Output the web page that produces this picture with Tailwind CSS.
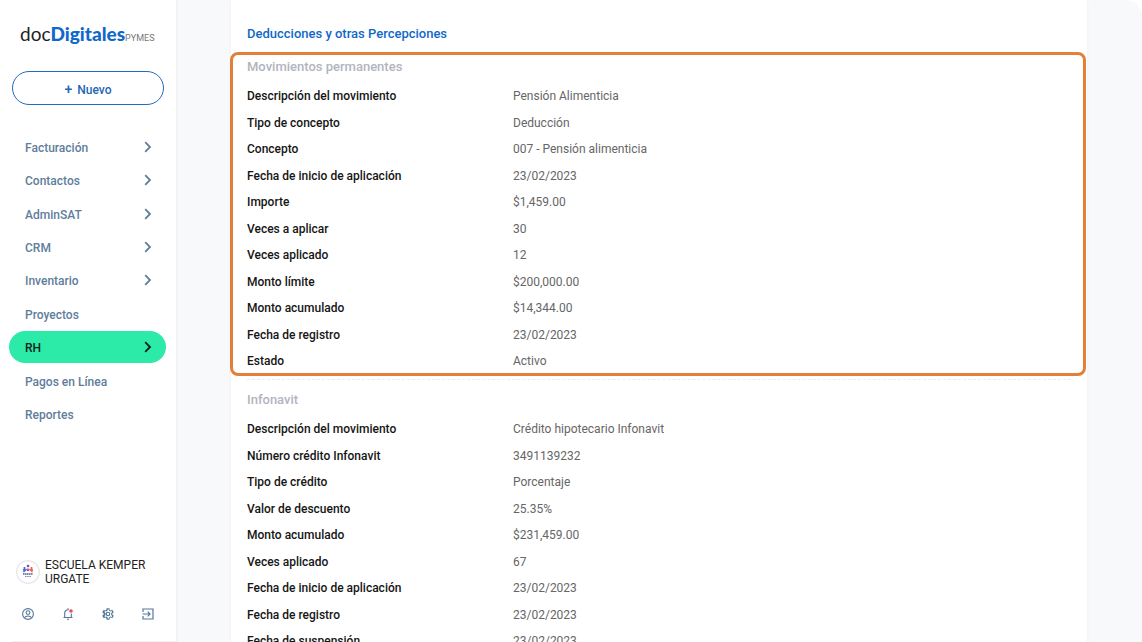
<!DOCTYPE html>
<html lang="es">
  <head>
    <meta charset="UTF-8" />
    <meta name="viewport" content="width=device-width, initial-scale=1.0" />
    <title>docDigitales PYMES</title>
    <script src="https://cdn.jsdelivr.net/npm/@tailwindcss/browser@4"></script>
  </head>
  <body class="flex h-screen overflow-hidden bg-white font-['Roboto',sans-serif] text-xs">
    <svg class="hidden">
      <symbol id="chevron" viewBox="0 0 8 12">
        <path d="M1.200 1.200 6 6l-4.800 4.800" fill="none" stroke="currentColor" stroke-width="1.800" />
      </symbol>
    </svg>

    <!-- Sidebar -->
    <aside class="flex w-44 shrink-0 flex-col bg-white">
      <a href="#" class="ml-5 mt-5 flex h-7 items-baseline whitespace-nowrap font-['Lato',sans-serif] text-[19px] leading-7 text-[#222]">
        <span>doc</span><span class="font-black text-[#1068cc]">Digitales</span><span class="font-['Roboto',sans-serif] text-[9px] text-[#777]">PYMES</span>
      </a>

      <button class="mx-3 mt-[23px] h-[34px] rounded-full border border-[#1f6dbf] pt-0.5 font-medium text-[#1f66b5]">
        <span class="mr-0.5 text-sm leading-4">+</span> Nuevo
      </button>

      <nav class="mt-[26px] flex flex-col gap-px pl-[9px] pr-2.5 font-medium text-[#5f7d9c] *:pt-0.5 [&_svg]:mb-0.5">
        <a href="#" class="flex h-8 items-center justify-between rounded-full pl-4 pr-3.5">Facturación <svg class="h-3 w-2"><use href="#chevron" /></svg></a>
        <a href="#" class="flex h-8 items-center justify-between rounded-full pl-4 pr-3.5">Contactos <svg class="h-3 w-2"><use href="#chevron" /></svg></a>
        <a href="#" class="mt-px flex h-8 items-center justify-between rounded-full pl-4 pr-3.5">AdminSAT <svg class="h-3 w-2"><use href="#chevron" /></svg></a>
        <a href="#" class="flex h-8 items-center justify-between rounded-full pl-4 pr-3.5">CRM <svg class="h-3 w-2"><use href="#chevron" /></svg></a>
        <a href="#" class="flex h-8 items-center justify-between rounded-full pl-4 pr-3.5">Inventario <svg class="h-3 w-2"><use href="#chevron" /></svg></a>
        <a href="#" class="mt-px flex h-8 items-center rounded-full px-4">Proyectos</a>
        <a href="#" class="flex h-8 items-center justify-between rounded-full bg-[#2ceaa8] pl-4 pr-3.5 text-[#10201a]">RH <svg class="h-3 w-2"><use href="#chevron" /></svg></a>
        <a href="#" class="mt-px flex h-8 items-center rounded-full px-4">Pagos en Línea</a>
        <a href="#" class="flex h-8 items-center rounded-full px-4">Reportes</a>
      </nav>

      <div class="mt-auto flex items-center gap-[5px] pl-4 text-[#222]">
        <svg class="size-6 shrink-0" viewBox="0 0 24 24">
          <circle cx="12" cy="12" r="11.300" fill="#fff" stroke="#e8e9ed" stroke-width="1.400" />
          <circle cx="12" cy="6" r="1.300" fill="#7a4bb0" />
          <circle cx="8.500" cy="8" r="1.100" fill="#3c62c8" />
          <circle cx="15.500" cy="8" r="1.100" fill="#e8594f" />
          <path d="m12 7.500-1.500 3.500h3z" fill="#b13f9c" />
          <path d="m10.500 9-3 3M9 9.500 7 10" stroke="#3f66d4" stroke-width="1.300" />
          <path d="m13.500 9 3 3M15 9.500l2 .5" stroke="#e8615a" stroke-width="1.300" />
          <path d="M7 14h10" stroke="#5a5c99" stroke-width="1.300" stroke-dasharray="1.500 .4" />
          <path d="M9 16.500h6" stroke="#8186b5" stroke-width="1.200" stroke-dasharray="1.200 .5" />
        </svg>
        <p class="leading-[14px]">ESCUELA KEMPER URGATE</p>
      </div>

      <div class="mx-[21px] mb-5 mt-[21px] flex justify-between text-[#54779b]">
        <button aria-label="Perfil">
          <svg class="size-3.5" viewBox="0 0 14 14" fill="none" stroke="currentColor" stroke-width="1.100">
            <circle cx="7" cy="7" r="5.400" />
            <circle cx="7" cy="5.600" r="1.900" />
            <path d="M3.400 10.800C4.200 9.500 5.500 9 7 9s2.800.5 3.600 1.800" />
          </svg>
        </button>
        <button aria-label="Notificaciones">
          <svg class="size-3.5" viewBox="0 0 14 14" fill="none" stroke="currentColor" stroke-width="1.100">
            <path d="M2.500 10.500h9M3.700 10.500V6a3.300 3.300 0 0 1 4-3.200M10.300 6.500v4M7 1.300v1.500M6 12.300h2" />
            <circle cx="10" cy="4" r="1.800" fill="#ee4b55" stroke="none" />
          </svg>
        </button>
        <button aria-label="Configuración">
          <svg class="size-3.5" viewBox="0 0 24 24" fill="currentColor">
            <path d="M19.430 12.980c.04-.32.070-.64.070-.98s-.03-.66-.07-.98l2.110-1.650c.19-.15.240-.42.120-.64l-2-3.460c-.12-.22-.39-.3-.61-.22l-2.490 1c-.52-.4-1.080-.73-1.690-.98l-.38-2.650C14.460 2.180 14.250 2 14 2h-4c-.25 0-.46.180-.49.420l-.38 2.650c-.61.250-1.170.590-1.690.980l-2.490-1c-.23-.09-.49 0-.61.220l-2 3.460c-.13.220-.07.490.120.640l2.110 1.650c-.04.320-.07.650-.07.980s.03.660.070.980l-2.110 1.650c-.19.150-.24.420-.12.640l2 3.460c.12.220.390.300.610.220l2.490-1c.52.400 1.080.730 1.690.980l.38 2.650c.03.240.240.420.490.420h4c.25 0 .46-.18.490-.42l.38-2.650c.61-.25 1.170-.59 1.690-.98l2.490 1c.23.090.490 0 .61-.22l2-3.460c.12-.22.070-.49-.12-.64zm-1.980-1.710c.1.700.1.760 0 1.460l-.14 1.130 1.940 1.520-1.040 1.810-2.310-.93-1.970 1.140-.34 2.460h-2.080l-.34-2.460-1.970-1.140-2.310.93-1.040-1.810 1.960-1.530-.14-1.130c-.1-.7-.1-.76 0-1.460l.14-1.130-1.960-1.520 1.040-1.810 2.310.93 1.970-1.140.34-2.460h2.080l.34 2.460 1.970 1.140 2.310-.93 1.040 1.810-1.940 1.520zM12 8a4 4 0 1 0 0 8 4 4 0 0 0 0-8zm0 6a2 2 0 1 1 0-4 2 2 0 0 1 0 4z" />
          </svg>
        </button>
        <button aria-label="Cerrar sesión">
          <svg class="size-3.5" viewBox="0 0 14 14" fill="none" stroke="currentColor">
            <path d="M2 5V2h10v10H2V9M1.500 7H9M6.700 4.700 9 7 6.700 9.300" stroke-width="1.200" />
          </svg>
        </button>
      </div>
      <div class="ml-3 h-px bg-[#f0f0f2]"></div>
    </aside>

    <!-- Content -->
    <main class="min-w-0 flex-1 overflow-hidden rounded-tr-2xl border-l-2 border-[#f2f3f5] bg-[#f8f9fb] pl-[53px] pr-[55px]">
      <div class="min-h-full bg-white pt-6 shadow-[0_0_3px_#eceef2]">
        <h2 class="pl-4 text-[13px] font-medium leading-5 text-[#1068c8]">Deducciones y otras Percepciones</h2>

        <section class="-ml-px mr-px mt-2 rounded-lg border-3 border-[#e2803a] pl-3.5">
          <h3 class="mb-[7px] pt-0.5 text-[13px] font-medium leading-5 text-[#b1b5c0]">Movimientos permanentes</h3>
          <dl class="text-[#666] *:grid *:grid-cols-[266px_1fr] *:pb-0.5 *:leading-6 *:odd:pb-[3px] *:last:pb-0! [&_dt]:font-medium [&_dt]:text-[#151515]">
            <div><dt>Descripción del movimiento</dt><dd>Pensión Alimenticia</dd></div>
            <div><dt>Tipo de concepto</dt><dd>Deducción</dd></div>
            <div><dt>Concepto</dt><dd>007 - Pensión alimenticia</dd></div>
            <div><dt>Fecha de inicio de aplicación</dt><dd>23/02/2023</dd></div>
            <div><dt>Importe</dt><dd>$1,459.00</dd></div>
            <div><dt>Veces a aplicar</dt><dd>30</dd></div>
            <div><dt>Veces aplicado</dt><dd>12</dd></div>
            <div><dt>Monto límite</dt><dd>$200,000.00</dd></div>
            <div><dt>Monto acumulado</dt><dd>$14,344.00</dd></div>
            <div><dt>Fecha de registro</dt><dd>23/02/2023</dd></div>
            <div><dt>Estado</dt><dd>Activo</dd></div>
          </dl>
        </section>

        <section class="mx-4 mt-[3px] border-t border-dashed border-[#ececec] pt-2.5">
          <h3 class="mb-[7px] text-[13px] font-medium leading-5 text-[#b1b5c0]">Infonavit</h3>
          <dl class="text-[#666] *:grid *:grid-cols-[266px_1fr] *:pb-0.5 *:leading-6 *:odd:pb-[3px] *:last:pb-0! [&_dt]:font-medium [&_dt]:text-[#151515]">
            <div><dt>Descripción del movimiento</dt><dd>Crédito hipotecario Infonavit</dd></div>
            <div><dt>Número crédito Infonavit</dt><dd>3491139232</dd></div>
            <div><dt>Tipo de crédito</dt><dd>Porcentaje</dd></div>
            <div><dt>Valor de descuento</dt><dd>25.35%</dd></div>
            <div><dt>Monto acumulado</dt><dd>$231,459.00</dd></div>
            <div><dt>Veces aplicado</dt><dd>67</dd></div>
            <div><dt>Fecha de inicio de aplicación</dt><dd>23/02/2023</dd></div>
            <div><dt>Fecha de registro</dt><dd>23/02/2023</dd></div>
            <div><dt>Fecha de suspensión</dt><dd>23/02/2023</dd></div>
          </dl>
        </section>
      </div>
    </main>
  </body>
</html>
